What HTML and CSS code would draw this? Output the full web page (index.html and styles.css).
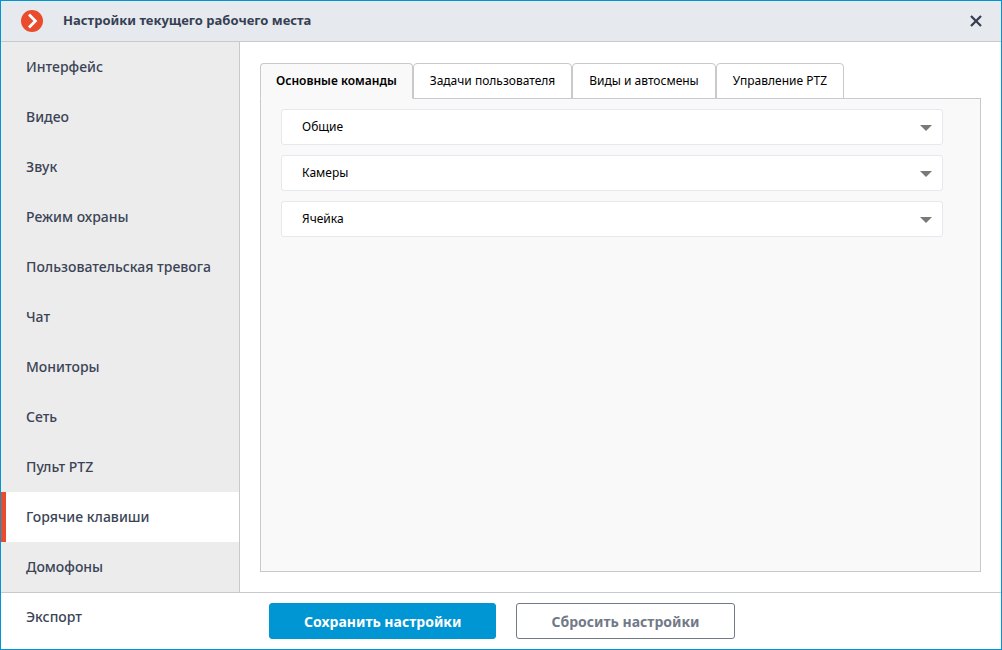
FILE: index.html
```html
<!DOCTYPE html>
<html lang="ru">
<head>
<meta charset="utf-8">
<meta name="viewport" content="width=device-width, initial-scale=1">
<title>Настройки текущего рабочего места</title>
<link rel="stylesheet" href="styles.css">
</head>
<body>
<div class="window">
  <header class="titlebar">
    <svg class="logo" viewBox="0 0 22 22" aria-hidden="true"><circle cx="11" cy="11" r="11" fill="#ea4b2d"/><path d="M8 4.4l6.4 6.5L8 17.4" fill="none" stroke="#fff" stroke-width="2.8"/></svg>
    <h1 class="title">Настройки текущего рабочего места</h1>
    <button class="close" type="button" aria-label="Закрыть"><svg class="close-icon" viewBox="0 0 12 12" aria-hidden="true"><path d="M1 1l10 10M11 1L1 11" stroke="#363f52" stroke-width="2.3"/></svg></button>
  </header>
  <div class="body">
    <nav class="sidebar" aria-label="Разделы">
      <a class="nav-item" href="#interface">Интерфейс</a>
      <a class="nav-item" href="#video">Видео</a>
      <a class="nav-item" href="#sound">Звук</a>
      <a class="nav-item" href="#guard">Режим охраны</a>
      <a class="nav-item" href="#alarm">Пользовательская тревога</a>
      <a class="nav-item" href="#chat">Чат</a>
      <a class="nav-item" href="#monitors">Мониторы</a>
      <a class="nav-item" href="#network">Сеть</a>
      <a class="nav-item" href="#ptz">Пульт PTZ</a>
      <a class="nav-item active" href="#hotkeys" aria-current="page">Горячие клавиши</a>
      <a class="nav-item" href="#intercoms">Домофоны</a>
    </nav>
    <main class="content">
      <div class="tabs" role="tablist">
        <button class="tab selected" type="button" role="tab" aria-selected="true">Основные команды</button>
        <button class="tab" type="button" role="tab" aria-selected="false">Задачи пользователя</button>
        <button class="tab" type="button" role="tab" aria-selected="false">Виды и автосмены</button>
        <button class="tab" type="button" role="tab" aria-selected="false">Управление PTZ</button>
      </div>
      <section class="panel" role="tabpanel">
        <button class="group" type="button" aria-expanded="false">Общие<svg class="arrow" viewBox="0 0 12 6" aria-hidden="true"><path d="M0 0h12L6 6z" fill="#7b7877"/></svg></button>
        <button class="group" type="button" aria-expanded="false">Камеры<svg class="arrow" viewBox="0 0 12 6" aria-hidden="true"><path d="M0 0h12L6 6z" fill="#7b7877"/></svg></button>
        <button class="group" type="button" aria-expanded="false">Ячейка<svg class="arrow" viewBox="0 0 12 6" aria-hidden="true"><path d="M0 0h12L6 6z" fill="#7b7877"/></svg></button>
      </section>
    </main>
  </div>
  <footer class="footer">
    <a class="nav-item footer-nav" href="#export">Экспорт</a>
    <div class="actions">
      <button class="btn primary" type="button">Сохранить настройки</button>
      <button class="btn secondary" type="button">Сбросить настройки</button>
    </div>
  </footer>
</div>
</body>
</html>
```
FILE: styles.css
```css
* { box-sizing: border-box; }

body {
  margin: 0;
  font-family: "Noto Sans", "Open Sans", sans-serif;
  font-size: 12px;
  color: #000;
}

button { font: inherit; color: inherit; cursor: pointer; }

.window {
  display: flex;
  flex-direction: column;
  min-height: 100vh;
  border: 1px solid #0095d3;
  background: #fff;
}

.titlebar {
  display: flex;
  align-items: center;
  height: 41px;
  padding: 0 15px 0 20px;
  border-bottom: 1px solid #c8c8cd;
  background: #e6e9ee;
}

.logo { width: 22px; height: 22px; margin-right: 20px; }

.title {
  flex: 1;
  margin: 0;
  padding-bottom: 2px;
  font-size: 13px;
  font-weight: 700;
  line-height: 20px;
  color: #363f52;
}

.close {
  display: flex;
  padding: 4px;
  border: 0;
  background: none;
}

.close-icon { width: 12px; height: 12px; }

.body { display: flex; flex: 1; }

.sidebar {
  flex: none;
  width: 239px;
  border-right: 1px solid #c8c8cd;
  background: #ececec;
}

.nav-item {
  display: block;
  padding: 0 20px 0 25px;
  font-size: 14px;
  font-weight: 500;
  line-height: 50px;
  color: #3b4456;
  text-decoration: none;
  white-space: nowrap;
}

.nav-item.active {
  padding-left: 20px;
  border-left: 5px solid #ea4b2d;
  background: #fff;
}

.content {
  display: flex;
  flex: 1;
  flex-direction: column;
  min-width: 0;
  padding: 21px 20px 20px;
}

.tabs { display: flex; }

.tab {
  height: 36px;
  padding: 0 16px 2px;
  border: 1px solid #c8c8cd;
  border-radius: 4px 4px 0 0;
  background: #fff;
  white-space: nowrap;
}

.tab.selected {
  z-index: 1;
  padding: 0 15px 2px;
  border-bottom-color: #f9f9f9;
  background: #f9f9f9;
  font-weight: 600;
}

.panel {
  display: flex;
  flex: 1;
  flex-direction: column;
  gap: 10px;
  margin-top: -1px;
  padding: 10px 37px 10px 20px;
  border: 1px solid #c8c8cd;
  background: #f9f9f9;
}

.group {
  display: flex;
  align-items: center;
  justify-content: space-between;
  height: 36px;
  padding: 0 10px 2px 20px;
  border: 1px solid #e6e8ed;
  border-radius: 3px;
  background: #fff;
}

.arrow { width: 12px; height: 6px; margin-top: 4px; }

.footer {
  display: flex;
  min-height: 57px;
  border-top: 1px solid #c8c8cd;
}

.footer-nav { flex: none; width: 239px; line-height: 48px; }

.actions {
  display: flex;
  align-items: center;
  gap: 20px;
  padding: 10px 29px;
}

.btn {
  height: 36px;
  padding: 0 34px;
  border: 1px solid #727987;
  border-radius: 3px;
  background: #fff;
  color: #727987;
  font-size: 14px;
  font-weight: 700;
  white-space: nowrap;
}

.btn.primary { border-color: #0095d3; background: #0095d3; color: #fff; }
```
